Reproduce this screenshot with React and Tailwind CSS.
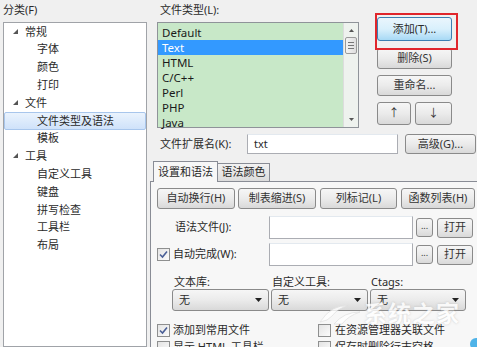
import React from 'react';

const FONT = "font-['Noto_Sans','Noto_Sans_CJK_SC',sans-serif]";

const treeItems = [
  { label: '常规', level: 0 },
  { label: '字体', level: 1 },
  { label: '颜色', level: 1 },
  { label: '打印', level: 1 },
  { label: '文件', level: 0 },
  { label: '文件类型及语法', level: 1, selected: true },
  { label: '模板', level: 1 },
  { label: '工具', level: 0 },
  { label: '自定义工具', level: 1 },
  { label: '键盘', level: 1 },
  { label: '拼写检查', level: 1 },
  { label: '工具栏', level: 1 },
  { label: '布局', level: 1 },
];

const fileTypes = ['Default', 'Text', 'HTML', 'C/C++', 'Perl', 'PHP', 'Java'];

const Btn = ({ children, className = '' }) => (
  <div
    className={`flex items-center justify-center rounded-[3px] border border-[#8a8a8a] bg-gradient-to-b from-[#f6f6f6] via-[#ebebeb] to-[#d9d9d9] text-[#333] ${className}`}
  >
    {children}
  </div>
);

const Check = ({ checked }) => (
  <div className="flex h-[13px] w-[13px] items-center justify-center border border-[#8e8f8f] bg-gradient-to-br from-[#e4e4e4] to-[#fbfbfb]">
    {checked && (
      <svg width="9" height="9" viewBox="0 0 9 9">
        <path d="M1 4.5 L3.5 7 L8 1.5" fill="none" stroke="#4a5f97" strokeWidth="1.6" />
      </svg>
    )}
  </div>
);

const Combo = ({ className = '' }) => (
  <div
    className={`flex h-[22px] items-center justify-between rounded-[3px] border border-[#8a8a8a] bg-gradient-to-b from-[#f6f6f6] via-[#ebebeb] to-[#d9d9d9] pl-[6px] pr-[6px] ${className}`}
  >
    <span>无</span>
    <svg width="7" height="4" viewBox="0 0 7 4">
      <path d="M0 0 H7 L3.5 4 Z" fill="#222" />
    </svg>
  </div>
);

export default function App() {
  return (
    <div className={`relative flex h-[347px] w-[477px] overflow-hidden bg-[#f0f0f0] text-[11px] text-[#2a2a2a] ${FONT}`}>
      {/* 左侧分类树 */}
      <div className="flex w-[150px] shrink-0 flex-col pl-[3px] pr-[3px] pt-[3px]">
        <div className="h-[16px] leading-[14px]">分类(F)</div>
        <div className="mt-[3px] flex-1 border border-[#a0a3a8] bg-white">
          {treeItems.map((it) => (
            <div
              key={it.label}
              className={`flex h-[17.8px] items-center ${
                it.selected
                  ? 'rounded-[2px] border border-[#a8c6ec] bg-gradient-to-b from-[#eaf3fd] to-[#cfe2fa]'
                  : 'border border-transparent'
              } ${it.level === 0 ? 'pl-[8px]' : 'pl-[32px]'}`}
            >
              {it.level === 0 && (
                <svg width="6" height="6" viewBox="0 0 6 6" className="mr-[6px]">
                  <path d="M5 0 V5 H0 Z" fill="#555" />
                </svg>
              )}
              <span>{it.label}</span>
            </div>
          ))}
        </div>
      </div>

      {/* 右侧 */}
      <div className="flex w-[330px] shrink-0 flex-col">
        <div className="flex pl-[7px]">
          <div className="flex w-[202px] flex-col">
            <div className="h-[22px] pl-[3px] pt-[3px] leading-[14px]">文件类型(L):</div>
            <div className="flex h-[106px] border border-[#8f9399] bg-[#c8e8c8]">
              <div className="flex-1 pt-[2px]">
                {fileTypes.map((t) => (
                  <div
                    key={t}
                    className={`flex h-[15px] items-center pl-[4px] text-[11.5px] ${
                      t === 'Text' ? 'bg-[#3399ff] text-white' : 'text-[#1a1a1a]'
                    }`}
                  >
                    {t}
                  </div>
                ))}
              </div>
              <div className="flex w-[15px] flex-col items-center border-l border-[#dcdcdc] bg-[#eef2ee]">
                <svg width="5" height="3" viewBox="0 0 5 3" className="mt-[6px]">
                  <path d="M0 3 L2.5 0 L5 3 Z" fill="#555" />
                </svg>
                <div className="mt-[5px] flex h-[17px] w-[12px] flex-col items-center justify-center gap-[2px] rounded-[2px] border border-[#9a9a9a] bg-gradient-to-r from-[#f4f4f4] to-[#dedede]">
                  <div className="h-px w-[6px] bg-[#777]" />
                  <div className="h-px w-[6px] bg-[#777]" />
                  <div className="h-px w-[6px] bg-[#777]" />
                </div>
                <div className="flex-1" />
                <svg width="5" height="3" viewBox="0 0 5 3" className="mb-[6px]">
                  <path d="M0 0 H5 L2.5 3 Z" fill="#555" />
                </svg>
              </div>
            </div>
          </div>

          <div className="relative ml-[18px] flex w-[75px] flex-col pt-[17px]">
            <div className="flex h-[24px] items-center justify-center rounded-[3px] border border-[#3c7fb1] bg-gradient-to-b from-[#eaf6fd] via-[#d9f0fc] to-[#a7d9f5]">
              添加(T)...
            </div>
            <Btn className="mt-[7px] h-[21px]">删除(S)</Btn>
            <Btn className="mt-[6px] h-[21px]">重命名...</Btn>
            <div className="mt-[6px] flex gap-[4px]">
              <Btn className="h-[23px] w-[34px]">↑</Btn>
              <Btn className="h-[23px] w-[37px]">↓</Btn>
            </div>
            <div className="absolute left-[-2px] top-[13px] h-[37px] w-[83px] border-[2.5px] border-[#e0262c]" />
          </div>
        </div>

        {/* 扩展名 */}
        <div className="mt-[6px] flex h-[20px] items-center pl-[10px]">
          <span className="w-[87px]">文件扩展名(K):</span>
          <div className="flex h-[20px] w-[151px] items-center border border-[#abadb3] border-t-[#e3e9ef] bg-white pl-[6px]">
            txt
          </div>
          <Btn className="ml-[7px] h-[20px] w-[71px]">高级(G)...</Btn>
        </div>

        {/* 选项卡 */}
        <div className="mt-[7px] flex items-end pl-[3px]">
          <div className="relative z-10 mb-[-1px] flex h-[21px] w-[65px] items-center justify-center border border-b-0 border-[#898c95] bg-[#f7f7f7]">
            设置和语法
          </div>
          <div className="flex h-[18px] w-[52px] items-center justify-center border border-b-0 border-l-0 border-[#898c95] bg-gradient-to-b from-[#f2f2f2] to-[#dcdcdc]">
            语法颜色
          </div>
        </div>
        <div className="flex flex-1 flex-col border-l border-t border-[#898c95] bg-[#f7f7f7] pl-[6px] pt-[6px]">
          <div className="flex">
            <Btn className="h-[21px] w-[78px]">自动换行(H)</Btn>
            <Btn className="ml-[3px] h-[21px] w-[78px]">制表缩进(S)</Btn>
            <Btn className="ml-[4px] h-[21px] w-[77px]">列标记(L)</Btn>
            <Btn className="ml-[4px] h-[21px] w-[74px]">函数列表(H)</Btn>
          </div>

          <div className="mt-[7px] flex h-[23px] items-center">
            <span className="w-[112px] pl-[18px]">语法文件(J):</span>
            <div className="h-[23px] w-[144px] border border-[#abadb3] border-t-[#e3e9ef] bg-white" />
            <Btn className="ml-[3px] h-[19px] w-[17px] pb-[3px] text-[9px]">...</Btn>
            <Btn className="ml-[4px] h-[20px] w-[36px]">打开</Btn>
          </div>

          <div className="mt-[4px] flex h-[23px] items-center">
            <div className="flex w-[112px] items-center">
              <Check checked />
              <span className="ml-[3px]">自动完成(W):</span>
            </div>
            <div className="h-[23px] w-[144px] border border-[#abadb3] border-t-[#e3e9ef] bg-white" />
            <Btn className="ml-[3px] h-[19px] w-[17px] pb-[3px] text-[9px]">...</Btn>
            <Btn className="ml-[4px] h-[20px] w-[36px]">打开</Btn>
          </div>

          <div className="mt-[9px] flex h-[13px] items-center pl-[17px] leading-[12px]">
            <span className="w-[98px]">文本库:</span>
            <span className="w-[99px]">自定义工具:</span>
            <span>Ctags:</span>
          </div>
          <div className="flex pl-[15px] pt-[1px]">
            <Combo className="w-[97px]" />
            <Combo className="ml-[2px] w-[97px]" />
            <Combo className="ml-[2px] w-[96px]" />
          </div>

          <div className="mt-[11px] flex h-[16px] items-center">
            <div className="flex w-[161px] items-center">
              <Check checked />
              <span className="ml-[3px]">添加到常用文件</span>
            </div>
            <Check />
            <span className="ml-[4px]">在资源管理器关联文件</span>
          </div>
          <div className="mt-[1px] flex h-[16px] items-center">
            <div className="flex w-[161px] items-center">
              <Check />
              <span className="ml-[3px]">显示 HTML 工具栏</span>
            </div>
            <Check />
            <span className="ml-[4px]">保存时删除行末空格</span>
          </div>
        </div>
      </div>

      {/* 水印 */}
      <div className="pointer-events-none absolute left-[318px] top-[296px] flex items-center opacity-80">
        <svg width="44" height="26" viewBox="0 0 44 26">
          <path d="M2 22 Q14 4 30 6 Q20 8 14 16 Q10 21 2 22 Z" fill="#ffffff" stroke="#dddddd" strokeWidth="0.8" />
          <path d="M16 24 Q26 12 42 12 Q30 16 24 24 Z" fill="#ffffff" stroke="#dddddd" strokeWidth="0.8" />
        </svg>
        <span className="ml-[2px] text-[23px] font-bold tracking-[1px] text-white [text-shadow:0_0_2px_rgba(140,140,140,0.5)]">
          系统之家
        </span>
      </div>
      <div className="pointer-events-none absolute left-[470px] top-[338px] h-[12px] w-[12px] rounded-full bg-[#4fb3e8]" />
    </div>
  );
}
